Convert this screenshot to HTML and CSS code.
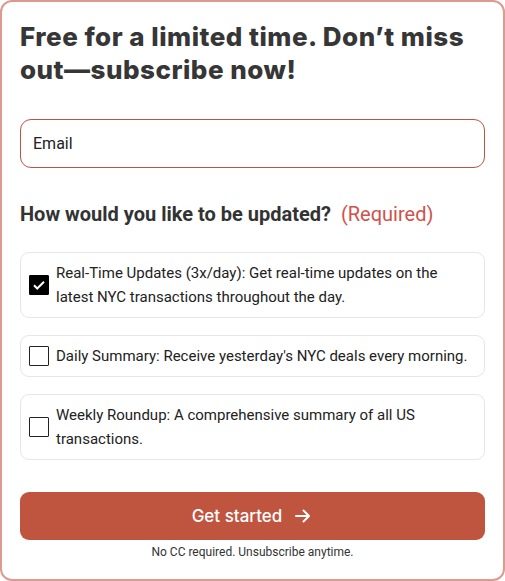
FILE: index.html
```html
<!DOCTYPE html>
<html lang="en">
<head>
<meta charset="utf-8">
<link rel="stylesheet" href="styles.css">
</head>
<body>
<div class="card">
  <h1 class="title">Free for a limited time. Don’t miss out—subscribe now!</h1>
  <div class="input">Email</div>
  <div class="question">How would you like to be updated? <span class="req">(Required)</span></div>
  <div class="options">
    <div class="option">
      <span class="box checked"><svg viewBox="0 0 20 20" width="20" height="20"><path d="M5 10.3l3.2 3.2L15 6.7" fill="none" stroke="#fff" stroke-width="2"/></svg></span>
      <span class="label">Real-Time Updates (3x/day): Get real-time updates on the latest NYC transactions throughout the day.</span>
    </div>
    <div class="option">
      <span class="box"></span>
      <span class="label">Daily Summary: Receive yesterday's NYC deals every morning.</span>
    </div>
    <div class="option">
      <span class="box"></span>
      <span class="label">Weekly Roundup: A comprehensive summary of all US transactions.</span>
    </div>
  </div>
  <div class="button">Get started <svg viewBox="0 0 20 20" width="20" height="20"><path d="M3 10h13M10.5 4.5L16 10l-5.5 5.5" fill="none" stroke="#fff" stroke-width="2" stroke-linecap="round" stroke-linejoin="round"/></svg></div>
  <div class="note">No CC required. Unsubscribe anytime.</div>
</div>
</body>
</html>
```
FILE: styles.css
```css
html, body { margin: 0; padding: 0; background: #fff; }
body { font-family: Roboto, "Liberation Sans", sans-serif; }
.card {
  width: 505px;
  height: 581px;
  box-sizing: border-box;
  border: 2px solid #dc9a90;
  border-radius: 12px;
  padding: 18px 18px 0 18px;
}
.title {
  margin: 0;
  font-family: "Inter", "Open Sans", sans-serif;
  font-weight: 800;
  font-size: 26px;
  line-height: 33px;
  color: #363636;
  letter-spacing: 0.5px;
}
.input {
  margin-top: 33px;
  height: 49px;
  box-sizing: border-box;
  border: 1px solid #c0523f;
  border-radius: 11px;
  padding: 0 12px;
  display: flex;
  align-items: center;
  font-size: 16px;
  color: #222;
}
.question {
  margin-top: 33px;
  font-size: 20px;
  font-weight: 700;
  color: #333;
  line-height: 26px;
}
.req { color: #d0524c; font-weight: 400; margin-left: 5px; }
.options {
  margin-top: 25px;
  display: flex;
  flex-direction: column;
  gap: 17px;
}
.option {
  border: 1px solid #e6e6e6;
  border-radius: 9px;
  padding: 8px 14px 8px 8px;
  display: flex;
  align-items: center;
  gap: 7px;
  min-height: 24px;
}
.box {
  flex: none;
  width: 20px;
  height: 20px;
  box-sizing: border-box;
  border: 1.5px solid #222;
  border-radius: 1px;
  display: flex;
  align-items: center;
  justify-content: center;
}
.box.checked { background: #000; border-color: #000; }
.box.checked svg { flex: none; }
.label {
  font-size: 15px;
  line-height: 24px;
  color: #222;
}
.button {
  margin-top: 32px;
  height: 48px;
  border-radius: 9px;
  background: #c0553f;
  color: #fff;
  display: flex;
  align-items: center;
  justify-content: center;
  gap: 11px;
  font-family: "Inter", "Open Sans", sans-serif;
  font-weight: 500;
  font-size: 17px;
}
.note {
  margin-top: 5px;
  text-align: center;
  font-size: 12px;
  color: #333;
  line-height: 14px;
}
```
